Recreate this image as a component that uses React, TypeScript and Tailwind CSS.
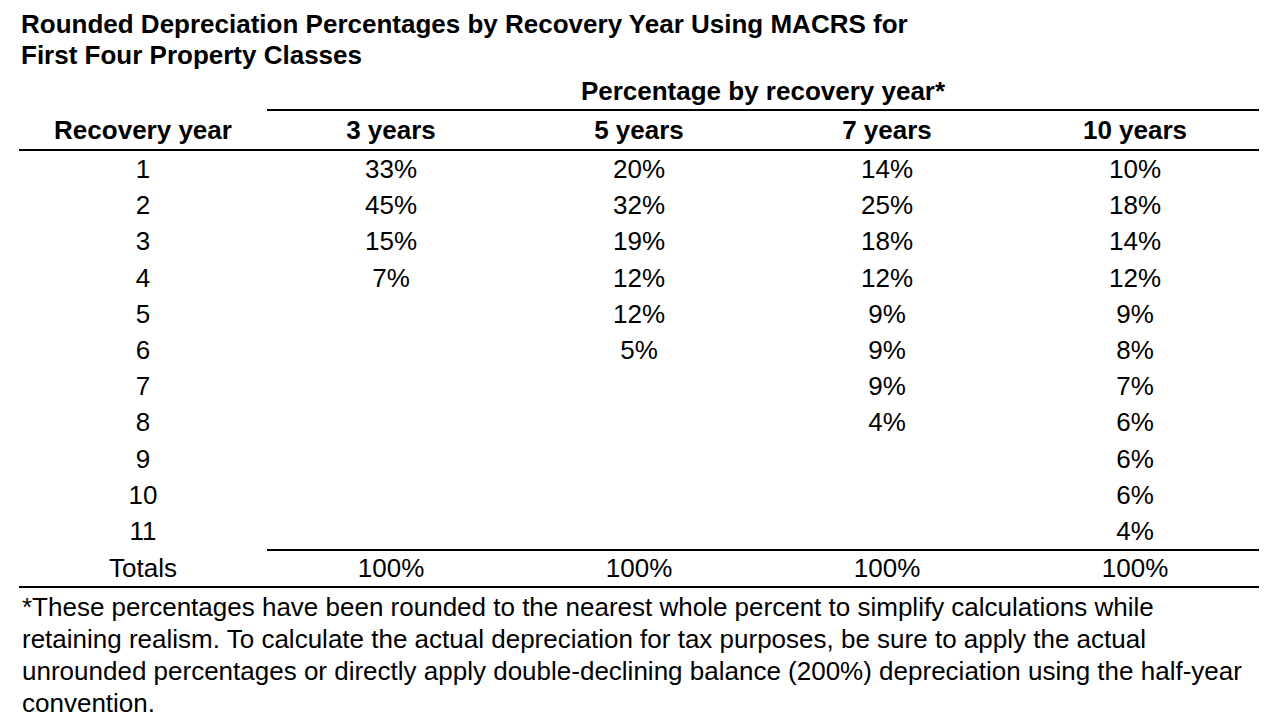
const rows: (string | null)[][] = [
  ['1', '33%', '20%', '14%', '10%'],
  ['2', '45%', '32%', '25%', '18%'],
  ['3', '15%', '19%', '18%', '14%'],
  ['4', '7%', '12%', '12%', '12%'],
  ['5', null, '12%', '9%', '9%'],
  ['6', null, '5%', '9%', '8%'],
  ['7', null, null, '9%', '7%'],
  ['8', null, null, '4%', '6%'],
  ['9', null, null, null, '6%'],
  ['10', null, null, null, '6%'],
  ['11', null, null, null, '4%'],
];

export default function App() {
  return (
    <div className="w-[1288px] h-[726px] overflow-hidden bg-white text-black pl-[19px] pt-[9px] font-['Liberation_Sans',Arial,sans-serif]">
      <h1 className="pl-[2px] text-[26px] font-bold leading-[31px]">
        Rounded Depreciation Percentages by Recovery Year Using MACRS for
        <br />
        First Four Property Classes
      </h1>

      <div className="w-[1240px] text-[26px] mt-[3px]">
        {/* Header group */}
        <div className="grid grid-cols-[248px_1fr]">
          <div />
          <div className="h-[37px] text-center font-bold leading-[35px] border-b-2 border-black">
            Percentage by recovery year*
          </div>
        </div>
        <div className="grid grid-cols-[248px_repeat(4,1fr)] h-[40px] font-bold leading-[38px] border-b-2 border-black">
          <div className="text-center">Recovery year</div>
          <div className="text-center">3 years</div>
          <div className="text-center">5 years</div>
          <div className="text-center">7 years</div>
          <div className="text-center">10 years</div>
        </div>

        {/* Body */}
        {rows.map(r => (
          <div key={r[0]} className="grid grid-cols-[248px_repeat(4,1fr)] h-[36.2px] leading-[36.2px]">
            {r.map((c, i) => (
              <div key={i} className="text-center">{c ?? ''}</div>
            ))}
          </div>
        ))}

        {/* Totals */}
        <div className="grid grid-cols-[248px_1fr]">
          <div />
          <div className="border-t-2 border-black" />
        </div>
        <div className="grid grid-cols-[248px_repeat(4,1fr)] h-[37px] leading-[35px] border-b-2 border-black">
          <div className="text-center">Totals</div>
          <div className="text-center">100%</div>
          <div className="text-center">100%</div>
          <div className="text-center">100%</div>
          <div className="text-center">100%</div>
        </div>

        <p className="pl-[3px] pt-[3px] leading-[32px] whitespace-nowrap">
          *These percentages have been rounded to the nearest whole percent to simplify calculations while
          <br />
          retaining realism. To calculate the actual depreciation for tax purposes, be sure to apply the actual
          <br />
          unrounded percentages or directly apply double-declining balance (200%) depreciation using the half-year
          <br />
          convention.
        </p>
      </div>
    </div>
  );
}
